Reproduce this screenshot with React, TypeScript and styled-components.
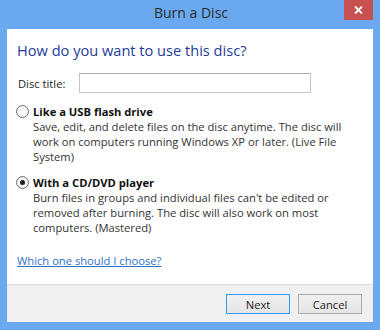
import React from "react";
import styled, { createGlobalStyle } from "styled-components";

const Global = createGlobalStyle`
  html, body { margin: 0; padding: 0; }
  body { background: #6aa9ef; font-family: "Open Sans", "Noto Sans", sans-serif; }
`;

const Window = styled.div`
  width: 380px;
  height: 330px;
  background: #6aa9ef;
  display: flex;
  flex-direction: column;
  overflow: hidden;
`;

const TitleBar = styled.div`
  height: 29px;
  position: relative;
  display: flex;
  align-items: center;
  justify-content: center;
`;

const Title = styled.div`
  font-size: 14px;
  color: #2b2b2b;
  margin-top: -4px;
  margin-left: 2px;
`;

const CloseButton = styled.div`
  position: absolute;
  top: 0;
  right: 7px;
  width: 29px;
  height: 20px;
  background: #c75050;
  display: flex;
  align-items: center;
  justify-content: center;
`;

const Client = styled.div`
  margin: 0 7px 8px 7px;
  flex: 1;
  display: flex;
  flex-direction: column;
  background: #ffffff;
`;

const Content = styled.div`
  flex: 1;
  padding: 11px 10px 0 10px;
  display: flex;
  flex-direction: column;
  font-size: 11.2px;
  color: #1e1e1e;
`;

const Heading = styled.div`
  font-size: 14.6px;
  line-height: 20px;
  color: #1f3b9b;
`;

const FieldRow = styled.div`
  margin-top: 13px;
  display: flex;
  align-items: center;
`;

const FieldLabel = styled.label`
  width: 62px;
  padding-left: 1px;
  box-sizing: border-box;
  line-height: 15px;
`;

const TextInput = styled.div`
  width: 232px;
  height: 20px;
  box-sizing: border-box;
  border: 1px solid #c5c5c5;
  border-top-color: #abadb3;
  background: #fff;
`;

const Option = styled.div<{ $first?: boolean }>`
  margin-top: ${(p) => (p.$first ? "11px" : "11px")};
  display: grid;
  grid-template-columns: 16px 1fr;
  column-gap: 0;
  line-height: 15px;
`;

const RadioCell = styled.div`
  height: 15px;
  display: flex;
  align-items: center;
`;

const Radio = styled.div<{ $checked?: boolean }>`
  width: 13px;
  height: 13px;
  box-sizing: border-box;
  border-radius: 50%;
  border: 1px solid #707070;
  background: radial-gradient(circle at 50% 40%, #ffffff 0%, #ececec 100%);
  margin-left: -1px;
  display: flex;
  align-items: center;
  justify-content: center;
  &::after {
    content: "";
    display: ${(p) => (p.$checked ? "block" : "none")};
    width: 5px;
    height: 5px;
    border-radius: 50%;
    background: #202020;
  }
`;

const OptionTitle = styled.div`
  font-weight: 700;
  color: #111;
`;

const OptionText = styled.div`
  grid-column: 2;
  color: #333;
  width: 310px;
`;

const HelpLink = styled.a`
  margin-top: 18px;
  line-height: 15px;
  color: #2e72c9;
  text-decoration: underline;
  align-self: flex-start;
`;

const Footer = styled.div`
  height: 37px;
  border-top: 1px solid #dfdfdf;
  background: #f0f0f0;
  display: flex;
  align-items: center;
  justify-content: flex-end;
  gap: 8px;
  padding-right: 11px;
`;

const Button = styled.div<{ $default?: boolean }>`
  width: 64px;
  height: 20px;
  box-sizing: border-box;
  border: 1px solid ${(p) => (p.$default ? "#3399ff" : "#acacac")};
  background: ${(p) => (p.$default ? "#e6edf5" : "#e5e5e5")};
  background: linear-gradient(#f0f0f0, #e5e5e5);
  display: flex;
  align-items: center;
  justify-content: center;
  font-size: 11.2px;
  color: #1e1e1e;
  margin-top: 1px;
`;

export default function App() {
  return (
    <Window>
      <Global />
      <TitleBar>
        <Title>Burn a Disc</Title>
        <CloseButton>
          <svg width="9" height="8" viewBox="0 0 9 8">
            <path d="M1 0.5 L8 7.5 M8 0.5 L1 7.5" stroke="#fff" strokeWidth="1.8" />
          </svg>
        </CloseButton>
      </TitleBar>
      <Client>
        <Content>
          <Heading>How do you want to use this disc?</Heading>
          <FieldRow>
            <FieldLabel>Disc title:</FieldLabel>
            <TextInput />
          </FieldRow>
          <Option $first>
            <RadioCell>
              <Radio />
            </RadioCell>
            <OptionTitle>Like a USB flash drive</OptionTitle>
            <OptionText>
              Save, edit, and delete files on the disc anytime. The disc will
              work on computers running Windows XP or later. (Live File System)
            </OptionText>
          </Option>
          <Option>
            <RadioCell>
              <Radio $checked />
            </RadioCell>
            <OptionTitle>With a CD/DVD player</OptionTitle>
            <OptionText>
              Burn files in groups and individual files can't be edited or
              removed after burning. The disc will also work on most computers.
              (Mastered)
            </OptionText>
          </Option>
          <HelpLink>Which one should I choose?</HelpLink>
        </Content>
        <Footer>
          <Button $default>Next</Button>
          <Button>Cancel</Button>
        </Footer>
      </Client>
    </Window>
  );
}
